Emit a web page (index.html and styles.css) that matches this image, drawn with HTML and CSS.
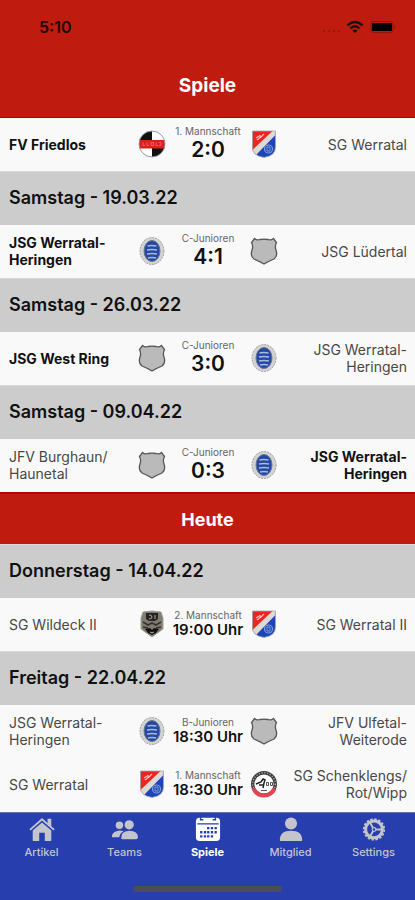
FILE: index.html
```html
<!DOCTYPE html>
<html lang="de">
<head>
    <meta charset="UTF-8" />
    <meta name="viewport" content="width=device-width, initial-scale=1.0" />
    <title>Spiele</title>
    <link rel="stylesheet" href="styles.css">
</head>
<body>
    <!-- Wappen -->
    <svg class="sprite" aria-hidden="true">
        <symbol id="friedlos" viewBox="0 0 28 28">
            <circle cx="14" cy="14" r="13" fill="#fff" />
            <path d="M14 1A13 13 0 0 0 1 14H14ZM14 27A13 13 0 0 0 27 14H14Z" fill="#111" />
            <path d="M1.300 10H26.700Q27.500 14 26.400 18.500H1.600Q.5 14 1.300 10Z" fill="#dd1f1c" />
            <path d="M5 12.500v3h2M9 12.500v3h2M13 12.500h2.500v3H13ZM18 12.500v3h2M21 12.500h2v3h-2" fill="none" stroke="#ea655f" />
            <circle cx="14" cy="14" r="13" fill="none" stroke="#999" />
        </symbol>
        <symbol id="werratal" viewBox="0 0 28 28">
            <path d="M2.500 1H25.500V17Q25.500 26 14 27.500Q2.500 26 2.500 17Z" fill="#1c46b4" />
            <path d="M2.500 1H24L3 22Q2.500 20 2.500 17Z" fill="#ee2420" />
            <path d="M22.500 1H25.500V5L6 25L3 22V19.500Z" fill="#ddd9d6" />
            <path d="M6 8l4-2.500 1 1.500 3-3M7 10l5-4" fill="none" stroke="#f8c0b8" stroke-width="1.200" />
            <circle cx="18.500" cy="19" r="4" fill="none" stroke="#7f9de0" stroke-width="1.200" />
            <path d="M17 17h3v4h-3z" fill="none" stroke="#7f9de0" />
            <path d="M2.500 1H25.500V17Q25.500 26 14 27.500Q2.500 26 2.500 17Z" fill="none" stroke="#a9a9b4" stroke-width=".8" />
        </symbol>
        <symbol id="heringen" viewBox="1 1 26 28">
            <ellipse cx="14" cy="15" rx="12" ry="13.500" fill="#d2d2d2" stroke="#a3a3a3" stroke-dasharray="2 1" />
            <ellipse cx="14" cy="15" rx="8" ry="10.500" fill="#2448a6" stroke="#6e7690" />
            <path d="M9.500 10q4-1 9 0M9 14q5-1 10 0M9 18q5-1 10 0M10 22q4-1 8 0" fill="none" stroke="#a9badf" stroke-width="1.600" />
        </symbol>
        <symbol id="leer" viewBox="0 0 28 28">
            <path d="M4.500 1.500Q7 3.600 10 2.500Q14 1.600 18 2.500Q21 3.600 23.500 1.500L26.500 5.500Q24.500 9 26 13Q28 19 24 22Q20 23.500 14 27Q8 23.500 4 22Q0 19 2 13Q3.500 9 1.500 5.500Z" fill="#bababa" stroke="#555" stroke-width="1.300" />
        </symbol>
        <symbol id="wildeck" viewBox="0 0 28 28">
            <path d="M5 2L14 1L23 2L25 8V19L14 27L3 19V8Z" fill="#807c72" stroke="#a5a198" />
            <path d="M8 3h12v6l-3 2H11L8 9Z" fill="#242424" />
            <path d="M11 5q3 0 3 2t-3 2M17 5v4" fill="none" stroke="#aaa" />
            <path d="M5 12l5 3 4-2 4 2 5-3M5 17l5 1M23 17l-5 1" fill="none" stroke="#35332f" stroke-width="1.600" />
            <path d="M7 19l5-1 2 2 2-2 5 1-3 4-4 2-4-2Z" fill="#111" />
            <path d="M12 22l2 1 2-1" fill="none" stroke="#bbb" />
        </symbol>
        <symbol id="schenk" viewBox="0 0 28 28">
            <circle cx="14" cy="14" r="11.300" fill="#fff" stroke="#3c3c3c" stroke-width="3.400" />
            <circle cx="14" cy="14" r="11.300" fill="none" stroke="#aaa" stroke-width="1.500" stroke-dasharray="1.200 1.600" />
            <path d="M3.500 18.500A11.400 11.400 0 0 0 24.500 18.500" fill="none" stroke="#e24450" stroke-width="4" />
            <path d="M6 14l5-2 2-3 2 1-1 3-1 5M9 15h4" fill="none" stroke="#222" stroke-width="1.500" />
            <path d="M16.500 12.500h2v3h-2zM20.500 12.500h2v3h-2zM11 20.500h6" fill="none" stroke="#555" />
        </symbol>
    </svg>

    <header class="header">
        <div class="statusbar">
            <span class="time">5:10</span>
            <div class="status-icons">
                <svg width="20" height="16" viewBox="0 0 20 16" fill="#8c1710">
                    <circle cx="3" cy="12" r="1" /><circle cx="8" cy="12" r="1" /><circle cx="13" cy="12" r="1" /><circle cx="18" cy="12" r="1" />
                </svg>
                <svg width="18" height="14" viewBox="0 0 18 14" fill="none" stroke="#16120f" stroke-width="2.200">
                    <path d="M1.500 5.500Q9-1.500 16.500 5.500M4.300 8.500Q9 4 13.700 8.500" />
                    <path d="M6.500 10.500Q9 8.500 11.500 10.500L9 13Z" fill="#16120f" stroke="none" />
                </svg>
                <svg width="28" height="14" viewBox="0 0 28 14">
                    <rect x="2" y="1.500" width="22" height="11" rx="3" fill="none" stroke="#8c1710" />
                    <rect x="3" y="3" width="20" height="8" rx="1" fill="#000" />
                    <path d="M25.500 5v4q2-2 0-4" fill="#8c1710" />
                </svg>
            </div>
        </div>
        <h1 class="title">Spiele</h1>
    </header>

    <main class="games">
        <div class="game">
            <div class="team winner">FV Friedlos</div>
            <svg class="crest"><use href="#friedlos" /></svg>
            <div class="result"><span class="league">1. Mannschaft</span><strong class="score">2:0</strong></div>
            <svg class="crest"><use href="#werratal" /></svg>
            <div class="team away">SG Werratal</div>
        </div>

        <h2 class="date">Samstag - 19.03.22</h2>
        <div class="game">
            <div class="team winner">JSG Werratal-<br>Heringen</div>
            <svg class="crest"><use href="#heringen" /></svg>
            <div class="result"><span class="league">C-Junioren</span><strong class="score">4:1</strong></div>
            <svg class="crest"><use href="#leer" /></svg>
            <div class="team away">JSG Lüdertal</div>
        </div>

        <h2 class="date">Samstag - 26.03.22</h2>
        <div class="game">
            <div class="team winner">JSG West Ring</div>
            <svg class="crest"><use href="#leer" /></svg>
            <div class="result"><span class="league">C-Junioren</span><strong class="score">3:0</strong></div>
            <svg class="crest"><use href="#heringen" /></svg>
            <div class="team away">JSG Werratal-<br>Heringen</div>
        </div>

        <h2 class="date">Samstag - 09.04.22</h2>
        <div class="game">
            <div class="team">JFV Burghaun/<br>Haunetal</div>
            <svg class="crest"><use href="#leer" /></svg>
            <div class="result"><span class="league">C-Junioren</span><strong class="score">0:3</strong></div>
            <svg class="crest"><use href="#heringen" /></svg>
            <div class="team away winner">JSG Werratal-<br>Heringen</div>
        </div>

        <h2 class="today">Heute</h2>

        <h2 class="date">Donnerstag - 14.04.22</h2>
        <div class="game">
            <div class="team">SG Wildeck II</div>
            <svg class="crest"><use href="#wildeck" /></svg>
            <div class="result"><span class="league">2. Mannschaft</span><strong class="kickoff">19:00 Uhr</strong></div>
            <svg class="crest"><use href="#werratal" /></svg>
            <div class="team away">SG Werratal II</div>
        </div>

        <h2 class="date">Freitag - 22.04.22</h2>
        <div class="game">
            <div class="team">JSG Werratal-<br>Heringen</div>
            <svg class="crest"><use href="#heringen" /></svg>
            <div class="result"><span class="league">B-Junioren</span><strong class="kickoff">18:30 Uhr</strong></div>
            <svg class="crest"><use href="#leer" /></svg>
            <div class="team away">JFV Ulfetal-<br>Weiterode</div>
        </div>
        <div class="game">
            <div class="team">SG Werratal</div>
            <svg class="crest"><use href="#werratal" /></svg>
            <div class="result"><span class="league">1. Mannschaft</span><strong class="kickoff">18:30 Uhr</strong></div>
            <svg class="crest"><use href="#schenk" /></svg>
            <div class="team away">SG Schenklengs/<br>Rot/Wipp</div>
        </div>
    </main>

    <footer class="footer">
        <nav class="tabs">
            <a class="tab" href="#">
                <svg class="tab-icon" viewBox="0 0 28 28" fill="currentColor">
                    <path d="M14 7L24 15.500V26Q24 27 23 27H17V18H11V27H5Q4 27 4 26V15.500Z" />
                    <path d="M1 15L14 3.500L27 15" fill="none" stroke="currentColor" stroke-width="2" />
                    <path d="M20 3h4v9l-4-3.500z" />
                </svg>
                Artikel
            </a>
            <a class="tab" href="#">
                <svg class="tab-icon" viewBox="0 0 28 28" fill="currentColor">
                    <circle cx="8" cy="10" r="4" />
                    <path d="M0 23q-1-6 8-7.500 3 0 4.500 1Q8 19 8 23Z" />
                    <circle cx="18.500" cy="9.500" r="5" />
                    <path d="M10 24.500q-1-8 8.500-8.500Q28 16.500 28 23 27.500 25 26 25H11Q10 25 10 24.500Z" />
                </svg>
                Teams
            </a>
            <a class="tab active" href="#">
                <svg class="tab-icon" viewBox="0 0 28 28">
                    <rect x="1" y="2" width="26" height="25" rx="4" fill="currentColor" />
                    <path d="M2.500 8.500h23M6 1v3h3M22 1v3h-3" fill="none" stroke="#263eae" stroke-width="1.500" />
                    <path d="M13 13h2.500M17 13h2.500M21 13h2.500M5.500 17.500h2.500M9.500 17.500h2.500M13 17.500h2.500M17 17.500h2.500M21 17.500h2.500M5.500 22h2.500M9.500 22h2.500M13 22h2.500M17 22h2.500" stroke="#263eae" stroke-width="2.500" />
                </svg>
                Spiele
            </a>
            <a class="tab" href="#">
                <svg class="tab-icon" viewBox="0 0 28 28" fill="currentColor">
                    <circle cx="14" cy="8" r="6.500" />
                    <path d="M2 26q0-10 12-10t12 10q0 1-1 1H3q-1 0-1-1Z" />
                </svg>
                Mitglied
            </a>
            <a class="tab" href="#">
                <svg class="tab-icon" viewBox="0 0 28 28" fill="none" stroke="currentColor">
                    <circle cx="14" cy="14.500" r="11" stroke-width="2" stroke-dasharray="2.600 1.720" />
                    <circle cx="14" cy="14.500" r="9" stroke-width="3.200" />
                    <path d="M14 14.500H22M14 14.500L10 7.500M14 14.500L10 21.500" stroke-width="2" />
                    <circle cx="14" cy="14.500" r="2" fill="#263eae" stroke-width="1.200" />
                </svg>
                Settings
            </a>
        </nav>
        <div class="home-bar"></div>
    </footer>
</body>
</html>
```
FILE: styles.css
```css
* {
    box-sizing: border-box;
}

body {
    margin: 0;
    min-height: 100vh;
    display: flex;
    flex-direction: column;
    background: #f9f9f9;
    color: #111;
    font-family: Inter, "Liberation Sans", sans-serif;
}

.sprite {
    position: absolute;
    width: 0;
    height: 0;
}

h1, h2 {
    margin: 0;
}

.header {
    background: #bf1b0f;
    border-bottom: 1px solid #b80000;
    padding-bottom: 19px;
}

.statusbar {
    display: flex;
    justify-content: space-between;
    align-items: center;
    height: 54px;
    padding: 0 18px 0 39px;
}

.time {
    font-size: 16px;
    font-weight: 600;
    color: #1c0503;
}

.status-icons {
    display: flex;
    align-items: center;
    gap: 5px;
}

.title {
    padding-top: 20px;
    font-size: 19px;
    line-height: 24px;
    font-weight: 700;
    text-align: center;
    color: #fff;
}

.games {
    flex: 1;
}

.game {
    display: grid;
    grid-template-columns: 1fr 28px 84px 28px 1fr;
    align-items: center;
    min-height: 53px;
    padding: 0 8px 1px 9px;
}

.team {
    font-size: 14px;
    line-height: 17px;
    font-weight: 400;
    color: #484848;
}

.winner {
    font-weight: 700;
    color: #111;
}

.away {
    text-align: right;
}

.crest {
    width: 28px;
    height: 28px;
}

.result {
    display: flex;
    flex-direction: column;
    align-items: center;
}

.league {
    font-size: 10px;
    line-height: 12px;
    color: #666;
    white-space: nowrap;
}

.score {
    font-size: 21px;
    line-height: 26px;
    font-weight: 600;
}

.kickoff {
    font-size: 15px;
    line-height: 18px;
    font-weight: 600;
    white-space: nowrap;
}

.date {
    display: flex;
    align-items: center;
    min-height: 54px;
    padding: 0 9px 2px;
    border-top: 1px solid #d9d9d9;
    background: #ccc;
    font-size: 18px;
    font-weight: 600;
}

.today {
    display: flex;
    align-items: center;
    justify-content: center;
    min-height: 52px;
    border-top: 2px solid #b80000;
    background: #bf1b0f;
    color: #fff;
    font-size: 18px;
    font-weight: 700;
}

.footer {
    background: #263eae;
    border-top: 1px solid #6672a8;
    padding-bottom: 8px;
}

.tabs {
    display: grid;
    grid-template-columns: repeat(5, 1fr);
}

.tab {
    display: flex;
    flex-direction: column;
    align-items: center;
    gap: 2px;
    padding-top: 3px;
    color: #c4c4cc;
    font-size: 11px;
    line-height: 16px;
    font-weight: 500;
    text-decoration: none;
}

.active {
    color: #fff;
    font-weight: 700;
}

.tab-icon {
    width: 26px;
    height: 26px;
}

.home-bar {
    width: 36%;
    height: 6px;
    margin: 26px auto 0;
    border-radius: 3px;
    background: #4d4d55;
}
```
